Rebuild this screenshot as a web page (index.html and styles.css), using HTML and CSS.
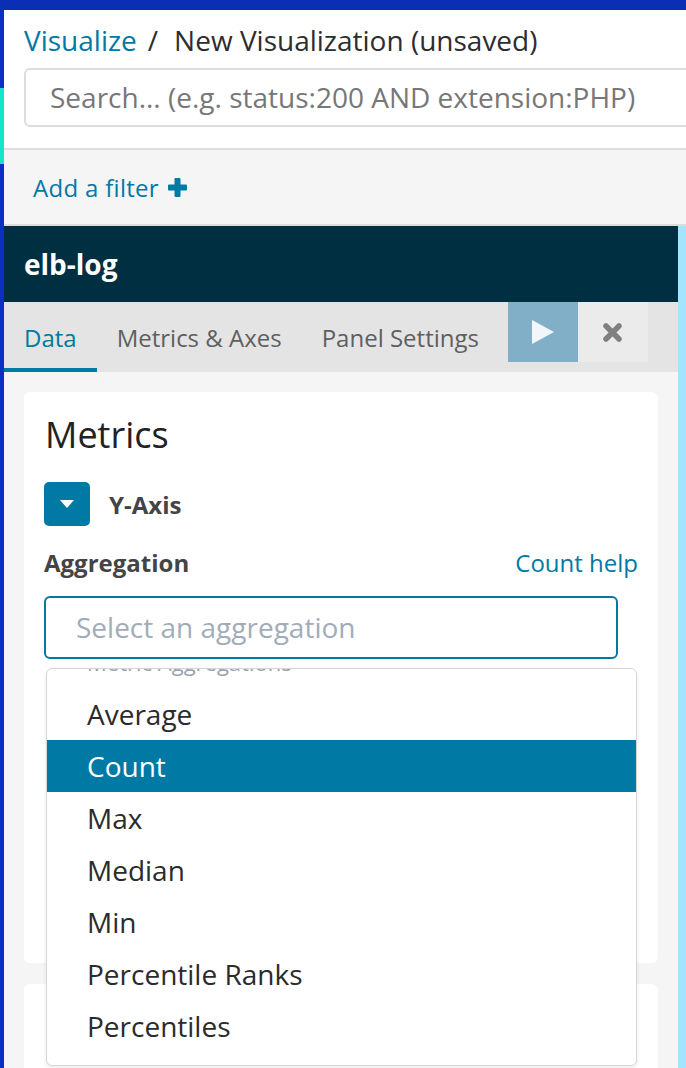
FILE: index.html
```html
<!DOCTYPE html>
<html lang="en">
<head>
<meta charset="utf-8">
<title>New Visualization (unsaved)</title>
<link rel="stylesheet" href="styles.css">
</head>
<body>
<div class="topbar"></div>
<div class="app">
  <nav class="sidenav">
    <div class="nav-a"></div>
    <div class="nav-active"></div>
    <div class="nav-b"></div>
  </nav>
  <main class="main">
    <header class="header">
      <div class="breadcrumbs"><span class="crumb-link">Visualize</span><span class="crumb-sep">/</span><span class="crumb-current">New Visualization (unsaved)</span></div>
      <div class="search">Search... (e.g. status:200 AND extension:PHP)</div>
    </header>
    <div class="filterbar">
      <span class="add-filter">Add a filter</span>
      <svg class="plus" width="19" height="19" viewBox="0 0 19 19"><rect x="6.5" y="0" width="6" height="19" rx="1" fill="#0079a5"/><rect x="0" y="6.5" width="19" height="6" rx="1" fill="#0079a5"/></svg>
    </div>
    <div class="workspace">
      <section class="editor">
        <div class="index-title">elb-log</div>
        <div class="tabs">
          <div class="tab active">Data</div>
          <div class="tab">Metrics &amp; Axes</div>
          <div class="tab">Panel Settings</div>
          <div class="tab-actions">
            <div class="btn-apply"><svg width="22" height="24" viewBox="0 0 22 24"><path d="M0 0 L22 12 L0 24 Z" fill="#f2f6f9"/></svg></div>
            <div class="btn-discard"><svg width="19" height="19" viewBox="0 0 19 19"><path d="M3 3 L16 16 M16 3 L3 16" stroke="#808080" stroke-width="5.5" stroke-linecap="round"/></svg></div>
          </div>
        </div>
        <div class="editor-body">
          <div class="card card-metrics">
            <h2 class="card-title">Metrics</h2>
            <div class="agg-row">
              <div class="toggle-btn"><svg width="14" height="8" viewBox="0 0 14 8"><path d="M0 0 L14 0 L7 8 Z" fill="#fff"/></svg></div>
              <span class="agg-name">Y-Axis</span>
            </div>
            <div class="agg-head">
              <span class="agg-label">Aggregation</span>
              <span class="agg-help">Count help</span>
            </div>
            <div class="select-wrap">
              <div class="select">Select an aggregation</div>
              <div class="dropdown">
                <div class="dropdown-list">
                  <div class="dd-group">Metric Aggregations</div>
                  <div class="dd-item">Average</div>
                  <div class="dd-item selected">Count</div>
                  <div class="dd-item">Max</div>
                  <div class="dd-item">Median</div>
                  <div class="dd-item">Min</div>
                  <div class="dd-item">Percentile Ranks</div>
                  <div class="dd-item">Percentiles</div>
                </div>
              </div>
            </div>
          </div>
          <div class="card card-buckets"></div>
        </div>
      </section>
      <div class="vis-strip"></div>
    </div>
  </main>
</div>
</body>
</html>
```

FILE: styles.css
```css
html, body {
  margin: 0;
  padding: 0;
}
body {
  font-family: "Open Sans", "Noto Sans", sans-serif;
  background: #f5f5f5;
  height: 1068px;
  overflow: hidden;
  color: #2d2d2d;
}
.topbar {
  height: 10px;
  background: #0a2fb5;
}
.app {
  display: flex;
  height: 1058px;
}
.sidenav {
  width: 4px;
  flex-shrink: 0;
  display: flex;
  flex-direction: column;
}
.nav-a {
  height: 78px;
  flex-shrink: 0;
  background: #0b2fc0;
}
.nav-active {
  height: 76px;
  flex-shrink: 0;
  background: #12e6c8;
}
.nav-b {
  flex: 1;
  background: #0b2fc0;
}
.main {
  flex: 1;
  min-width: 0;
  display: flex;
  flex-direction: column;
  overflow: hidden;
}
.header {
  flex-shrink: 0;
  background: #fff;
  padding: 10px 0 21px 20px;
  border-bottom: 2px solid #dddddd;
}
.breadcrumbs {
  height: 40px;
  line-height: 40px;
  font-size: 28px;
  white-space: nowrap;
}
.crumb-link {
  color: #0079a5;
}
.crumb-sep {
  color: #2d2d2d;
  margin: 0 16px 0 11px;
}
.crumb-current {
  color: #2d2d2d;
}
.search {
  margin-top: 8px;
  margin-right: -40px;
  height: 59px;
  box-sizing: border-box;
  border: 2px solid #dddddd;
  border-radius: 6px;
  padding-left: 24px;
  font-size: 28px;
  line-height: 55px;
  color: #777777;
  white-space: nowrap;
}
.filterbar {
  flex-shrink: 0;
  height: 74px;
  padding-left: 29px;
  border-bottom: 2px solid #dddddd;
  display: flex;
  align-items: center;
  font-size: 24px;
  letter-spacing: 0.3px;
  color: #0079a5;
}
.plus {
  margin-left: 9px;
}
.workspace {
  flex: 1;
  min-height: 0;
  display: flex;
  overflow: hidden;
}
.editor {
  flex: 1;
  min-width: 0;
  display: flex;
  flex-direction: column;
  overflow: hidden;
}
.vis-strip {
  width: 8px;
  flex-shrink: 0;
  background: #a4e5fe;
}
.index-title {
  flex-shrink: 0;
  height: 76px;
  background: #002f42;
  color: #ffffff;
  font-weight: 700;
  font-size: 28px;
  padding-left: 20px;
  display: flex;
  align-items: center;
}
.tabs {
  flex-shrink: 0;
  height: 70px;
  background: #e4e4e4;
  display: flex;
  align-items: flex-start;
}
.tab {
  height: 70px;
  box-sizing: border-box;
  padding: 4px 20px 0;
  border-bottom: 4px solid transparent;
  display: flex;
  align-items: center;
  font-size: 24px;
  color: #5f5f5f;
  white-space: nowrap;
}
.tab.active {
  color: #0079a5;
  border-bottom-color: #0079a5;
}
.tab-actions {
  display: flex;
  margin-left: 9px;
}
.btn-apply,
.btn-discard {
  width: 70px;
  height: 60px;
  display: flex;
  align-items: center;
  justify-content: center;
}
.btn-apply {
  background: #82afc8;
}
.btn-discard {
  background: #ebebeb;
}
.editor-body {
  flex-shrink: 0;
  padding: 20px;
  background: #f5f5f5;
}
.card {
  background: #ffffff;
  border-radius: 6px;
}
.card-metrics {
  position: relative;
  height: 571px;
  box-sizing: border-box;
  padding: 21px 20px 0 20px;
}
.card-buckets {
  margin-top: 21px;
  height: 200px;
}
.card-title {
  margin: 0 0 0 1px;
  font-size: 36px;
  line-height: 44px;
  font-weight: 400;
  color: #222222;
}
.agg-row {
  margin-top: 25px;
  height: 44px;
  display: flex;
  align-items: center;
}
.toggle-btn {
  width: 46px;
  height: 44px;
  border-radius: 5px;
  background: #0079a5;
  display: flex;
  align-items: center;
  justify-content: center;
}
.agg-name {
  margin-left: 19px;
  font-size: 24px;
  font-weight: 700;
  color: #444444;
}
.agg-head {
  margin-top: 21px;
  display: flex;
  justify-content: space-between;
  line-height: 32px;
  font-size: 24px;
}
.agg-label {
  font-weight: 700;
  color: #444444;
}
.agg-help {
  color: #0079a5;
}
.select-wrap {
  position: relative;
  margin-top: 17px;
  width: 574px;
}
.select {
  height: 63px;
  box-sizing: border-box;
  border: 2px solid #0079a5;
  border-radius: 6px;
  padding-left: 30px;
  font-size: 28px;
  line-height: 59px;
  color: #a2acb9;
}
.dropdown {
  position: absolute;
  top: 72px;
  left: 2px;
  width: 591px;
  height: 398px;
  box-sizing: border-box;
  border: 1px solid #d6d6d6;
  border-radius: 6px;
  background: #ffffff;
  overflow: hidden;
  box-shadow: 0 2px 4px rgba(0, 0, 0, 0.08);
}
.dropdown-list {
  margin-top: -33px;
}
.dd-group {
  height: 52px;
  line-height: 52px;
  padding-left: 40px;
  font-size: 22px;
  color: #98a2b3;
}
.dd-item {
  height: 52px;
  line-height: 52px;
  padding-left: 40px;
  font-size: 28px;
  color: #2b2b2b;
}
.dd-item.selected {
  background: #0079a5;
  color: #ffffff;
}
```
